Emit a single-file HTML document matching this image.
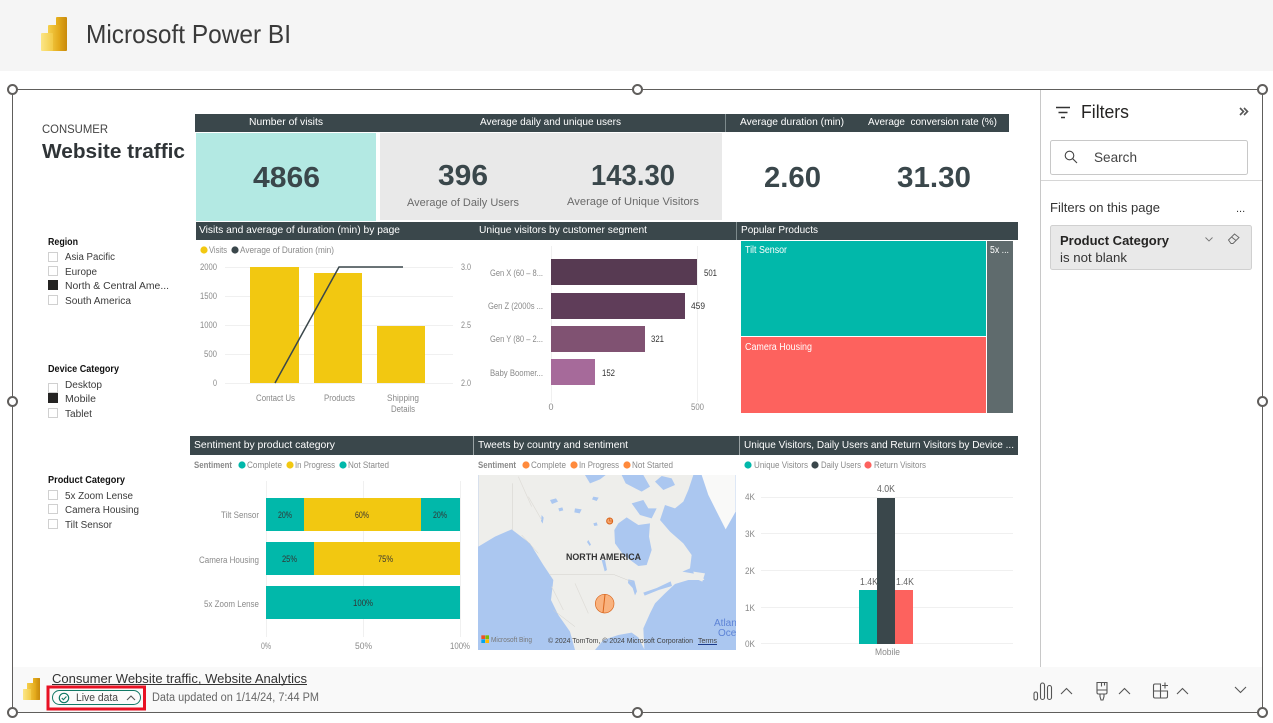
<!DOCTYPE html>
<html lang="en">
<head>
<meta charset="utf-8">
<title>Microsoft Power BI</title>
<style>
html,body{margin:0;padding:0;background:#fff;width:1273px;height:723px;overflow:hidden}
svg{display:block;position:absolute;left:0;top:0}
text{font-family:"Liberation Sans",Arial,sans-serif;white-space:pre}
.h{fill:#fff;font-size:10.5px}
.a{fill:#8a8a8a;font-size:9px}
.lg{fill:#8a8a8a;font-size:9px}
.s{fill:#3a3a3a;font-size:10px}
.sb{fill:#111;font-size:10px;font-weight:bold}
.k{fill:#3a474b;font-weight:bold;font-size:29px}
.l{fill:#6a6a6a;font-size:11px}
.d{fill:#333;font-size:9px}
.w{fill:#fff;font-size:10px}
.box{fill:#fff;stroke:#d0d0d0;stroke-width:1}
.g{stroke:#f0f0f0;stroke-width:1;fill:none}
.ic{fill:none;stroke:#555;stroke-width:1.1}
.hd{fill:#fff;stroke:#605e5c;stroke-width:2}
</style>
</head>
<body>
<svg width="1273" height="723" viewBox="0 0 1273 723" xmlns="http://www.w3.org/2000/svg">
<defs>
<linearGradient id="b1" x1="0" y1="0" x2="1" y2="0"><stop offset="0" stop-color="#e8b21f"/><stop offset="1" stop-color="#c98a0c"/></linearGradient>
<linearGradient id="b2" x1="0" y1="0" x2="1" y2="0"><stop offset="0" stop-color="#f5d04c"/><stop offset="1" stop-color="#e2a617"/></linearGradient>
<linearGradient id="b3" x1="0" y1="0" x2="1" y2="0"><stop offset="0" stop-color="#fbe687"/><stop offset="1" stop-color="#f3cb47"/></linearGradient>
<clipPath id="mapc"><rect x="478" y="475" width="258" height="175"/></clipPath>
</defs>

<!-- top bar -->
<rect x="0" y="0" width="1273" height="71" fill="#f5f5f5"/>
<rect x="56" y="17" width="11" height="34" rx="1" fill="url(#b1)"/>
<rect x="48" y="25" width="12" height="26" rx="1" fill="url(#b2)"/>
<rect x="41" y="33" width="12" height="18" rx="1" fill="url(#b3)"/>
<text x="86" y="43" font-size="26" fill="#3a3a3a" textLength="205" lengthAdjust="spacingAndGlyphs">Microsoft Power BI</text>

<!-- bottom bar -->
<rect x="13" y="667" width="1249" height="46" fill="#f9f9f9"/>

<!-- title -->
<text x="42" y="133" font-size="12" fill="#444" textLength="66" lengthAdjust="spacingAndGlyphs">CONSUMER</text>
<text x="42" y="158" font-size="20.500" font-weight="bold" fill="#2f3437" textLength="143" lengthAdjust="spacingAndGlyphs">Website traffic</text>

<!-- KPI headers -->
<rect x="195" y="114" width="814" height="18" fill="#3a474b"/>
<rect x="725" y="114" width="1" height="18" fill="#7d8a8c"/>
<text class="h" x="249" y="125" textLength="74" lengthAdjust="spacingAndGlyphs">Number of visits</text>
<text class="h" x="480" y="125" textLength="141" lengthAdjust="spacingAndGlyphs">Average daily and unique users</text>
<text class="h" x="740" y="125" textLength="104" lengthAdjust="spacingAndGlyphs">Average duration (min)</text>
<text class="h" x="868" y="125" textLength="129" lengthAdjust="spacingAndGlyphs">Average  conversion rate (%)</text>

<rect x="196" y="133" width="180" height="88" fill="#b3e9e3"/>
<rect x="380" y="133" width="342" height="87" fill="#e9e9e9"/>
<text class="k" x="253" y="187" textLength="67" lengthAdjust="spacingAndGlyphs">4866</text>
<text class="k" x="438" y="185" textLength="50" lengthAdjust="spacingAndGlyphs">396</text>
<text class="k" x="591" y="185" textLength="84" lengthAdjust="spacingAndGlyphs">143.30</text>
<text class="k" x="764" y="187" textLength="57" lengthAdjust="spacingAndGlyphs">2.60</text>
<text class="k" x="897" y="187" textLength="74" lengthAdjust="spacingAndGlyphs">31.30</text>
<text class="l" x="407" y="206" textLength="112" lengthAdjust="spacingAndGlyphs">Average of Daily Users</text>
<text class="l" x="567" y="205" textLength="132" lengthAdjust="spacingAndGlyphs">Average of Unique Visitors</text>

<!-- row 2 headers -->
<rect x="196" y="222" width="822" height="18" fill="#3a474b"/>
<rect x="736" y="222" width="1" height="18" fill="#7d8a8c"/>
<text class="h" x="199" y="233" textLength="201" lengthAdjust="spacingAndGlyphs">Visits and average of duration (min) by page</text>
<text class="h" x="479" y="233" textLength="168" lengthAdjust="spacingAndGlyphs">Unique visitors by customer segment</text>
<text class="h" x="741" y="233" textLength="77" lengthAdjust="spacingAndGlyphs">Popular Products</text>

<!-- row 3 headers -->
<rect x="190" y="436" width="828" height="19" fill="#3a474b"/>
<rect x="473" y="436" width="1" height="19" fill="#9aa3a5"/>
<rect x="739" y="436" width="1" height="19" fill="#9aa3a5"/>
<text class="h" x="194" y="448" textLength="141" lengthAdjust="spacingAndGlyphs">Sentiment by product category</text>
<text class="h" x="478" y="448" textLength="150" lengthAdjust="spacingAndGlyphs">Tweets by country and sentiment</text>
<text class="h" x="744" y="448" textLength="270" lengthAdjust="spacingAndGlyphs">Unique Visitors, Daily Users and Return Visitors by Device ...</text>

<!-- slicers -->
<text class="sb" x="48" y="245" textLength="30" lengthAdjust="spacingAndGlyphs">Region</text>
<rect class="box" x="48.5" y="252.5" width="9" height="9"/>
<rect class="box" x="48.5" y="266.5" width="9" height="9"/>
<rect x="48" y="280" width="10" height="10" fill="#252423"/>
<rect class="box" x="48.5" y="295.5" width="9" height="9"/>
<text class="s" x="65" y="260" textLength="50" lengthAdjust="spacingAndGlyphs">Asia Pacific</text>
<text class="s" x="65" y="275" textLength="32" lengthAdjust="spacingAndGlyphs">Europe</text>
<text class="s" x="65" y="289" textLength="104" lengthAdjust="spacingAndGlyphs">North &amp; Central Ame...</text>
<text class="s" x="65" y="304" textLength="66" lengthAdjust="spacingAndGlyphs">South America</text>

<text class="sb" x="48" y="372" textLength="71" lengthAdjust="spacingAndGlyphs">Device Category</text>
<rect class="box" x="48.5" y="383.5" width="9" height="9"/>
<rect x="48" y="393" width="10" height="10" fill="#252423"/>
<rect class="box" x="48.5" y="408.5" width="9" height="9"/>
<text class="s" x="65" y="388" textLength="37" lengthAdjust="spacingAndGlyphs">Desktop</text>
<text class="s" x="65" y="402" textLength="31" lengthAdjust="spacingAndGlyphs">Mobile</text>
<text class="s" x="65" y="417" textLength="27" lengthAdjust="spacingAndGlyphs">Tablet</text>

<text class="sb" x="48" y="483" textLength="77" lengthAdjust="spacingAndGlyphs">Product Category</text>
<rect class="box" x="48.5" y="490.5" width="9" height="9"/>
<rect class="box" x="48.5" y="504.5" width="9" height="9"/>
<rect class="box" x="48.5" y="519.5" width="9" height="9"/>
<text class="s" x="65" y="499" textLength="68" lengthAdjust="spacingAndGlyphs">5x Zoom Lense</text>
<text class="s" x="65" y="513" textLength="74" lengthAdjust="spacingAndGlyphs">Camera Housing</text>
<text class="s" x="65" y="528" textLength="47" lengthAdjust="spacingAndGlyphs">Tilt Sensor</text>

<!-- chart 1 -->
<circle cx="204" cy="250" r="3.6" fill="#f2c811"/>
<text class="lg" x="209" y="253" textLength="18" lengthAdjust="spacingAndGlyphs">Visits</text>
<circle cx="235" cy="250" r="3.6" fill="#3a474b"/>
<text class="lg" x="240" y="253" textLength="94" lengthAdjust="spacingAndGlyphs">Average of Duration (min)</text>
<path class="g" d="M225 267.5H453M225 296.5H453M225 325.5H453M225 354.5H453M225 383.5H453"/>
<rect x="250" y="267" width="49" height="116" fill="#f2c811"/>
<rect x="314" y="273" width="48" height="110" fill="#f2c811"/>
<rect x="377" y="326" width="48" height="57" fill="#f2c811"/>
<path d="M275 383L339 267H403" fill="none" stroke="#3a474b" stroke-width="1.5"/>
<text class="a" x="200" y="270" textLength="17" lengthAdjust="spacingAndGlyphs">2000</text>
<text class="a" x="200" y="299" textLength="17" lengthAdjust="spacingAndGlyphs">1500</text>
<text class="a" x="200" y="328" textLength="17" lengthAdjust="spacingAndGlyphs">1000</text>
<text class="a" x="204" y="357" textLength="13" lengthAdjust="spacingAndGlyphs">500</text>
<text class="a" x="213" y="386" textLength="4" lengthAdjust="spacingAndGlyphs">0</text>
<text class="a" x="461" y="270" textLength="10" lengthAdjust="spacingAndGlyphs">3.0</text>
<text class="a" x="461" y="328" textLength="10" lengthAdjust="spacingAndGlyphs">2.5</text>
<text class="a" x="461" y="386" textLength="10" lengthAdjust="spacingAndGlyphs">2.0</text>
<text class="a" x="256" y="401" textLength="39" lengthAdjust="spacingAndGlyphs">Contact Us</text>
<text class="a" x="324" y="401" textLength="31" lengthAdjust="spacingAndGlyphs">Products</text>
<text class="a" x="387" y="401" textLength="32" lengthAdjust="spacingAndGlyphs">Shipping</text>
<text class="a" x="391" y="412" textLength="24" lengthAdjust="spacingAndGlyphs">Details</text>

<!-- chart 2 -->
<path class="g" d="M551.5 246V402M697.5 246V402"/>
<rect x="551" y="259" width="146" height="26" fill="#573a52"/>
<rect x="551" y="293" width="134" height="26" fill="#5f3d59"/>
<rect x="551" y="326" width="94" height="26" fill="#805272"/>
<rect x="551" y="359" width="44" height="26" fill="#a66a9a"/>
<text class="a" x="490" y="276" textLength="53" lengthAdjust="spacingAndGlyphs">Gen X (60 – 8...</text>
<text class="a" x="488" y="309" textLength="55" lengthAdjust="spacingAndGlyphs">Gen Z (2000s ...</text>
<text class="a" x="490" y="342" textLength="53" lengthAdjust="spacingAndGlyphs">Gen Y (80 – 2...</text>
<text class="a" x="490" y="376" textLength="53" lengthAdjust="spacingAndGlyphs">Baby Boomer...</text>
<text class="d" x="704" y="276" textLength="13" lengthAdjust="spacingAndGlyphs">501</text>
<text class="d" x="691" y="309" textLength="14" lengthAdjust="spacingAndGlyphs">459</text>
<text class="d" x="651" y="342" textLength="13" lengthAdjust="spacingAndGlyphs">321</text>
<text class="d" x="602" y="376" textLength="13" lengthAdjust="spacingAndGlyphs">152</text>
<text class="a" x="551" y="410" text-anchor="middle">0</text>
<text class="a" x="691" y="410" textLength="13" lengthAdjust="spacingAndGlyphs">500</text>

<!-- treemap -->
<rect x="741" y="241" width="245" height="95" fill="#01b8aa"/>
<rect x="741" y="337" width="245" height="76" fill="#fd625e"/>
<rect x="987" y="241" width="26" height="172" fill="#5f6b6d"/>
<text class="w" x="745" y="253" textLength="42" lengthAdjust="spacingAndGlyphs">Tilt Sensor</text>
<text class="w" x="745" y="350" textLength="67" lengthAdjust="spacingAndGlyphs">Camera Housing</text>
<text class="w" x="990" y="253" textLength="19" lengthAdjust="spacingAndGlyphs">5x ...</text>

<!-- chart sentiment -->
<text class="lg" x="194" y="468" font-weight="bold" textLength="38" lengthAdjust="spacingAndGlyphs">Sentiment</text>
<circle cx="242" cy="465" r="3.6" fill="#01b8aa"/>
<text class="lg" x="247" y="468" textLength="35" lengthAdjust="spacingAndGlyphs">Complete</text>
<circle cx="290" cy="465" r="3.6" fill="#f2c811"/>
<text class="lg" x="295" y="468" textLength="40" lengthAdjust="spacingAndGlyphs">In Progress</text>
<circle cx="343" cy="465" r="3.6" fill="#01b8aa"/>
<text class="lg" x="348" y="468" textLength="41" lengthAdjust="spacingAndGlyphs">Not Started</text>
<path class="g" d="M266.5 481V637M363.5 481V637M460.5 481V637"/>
<rect x="266" y="498" width="38" height="33" fill="#01b8aa"/>
<rect x="304" y="498" width="117" height="33" fill="#f2c811"/>
<rect x="421" y="498" width="39" height="33" fill="#01b8aa"/>
<rect x="266" y="542" width="48" height="33" fill="#01b8aa"/>
<rect x="314" y="542" width="146" height="33" fill="#f2c811"/>
<rect x="266" y="586" width="194" height="33" fill="#01b8aa"/>
<text class="a" x="221" y="518" textLength="38" lengthAdjust="spacingAndGlyphs">Tilt Sensor</text>
<text class="a" x="199" y="563" textLength="60" lengthAdjust="spacingAndGlyphs">Camera Housing</text>
<text class="a" x="204" y="607" textLength="55" lengthAdjust="spacingAndGlyphs">5x Zoom Lense</text>
<text class="d" x="278" y="518" textLength="14" lengthAdjust="spacingAndGlyphs">20%</text>
<text class="d" x="355" y="518" textLength="14" lengthAdjust="spacingAndGlyphs">60%</text>
<text class="d" x="433" y="518" textLength="14" lengthAdjust="spacingAndGlyphs">20%</text>
<text class="d" x="282" y="562" textLength="15" lengthAdjust="spacingAndGlyphs">25%</text>
<text class="d" x="378" y="562" textLength="15" lengthAdjust="spacingAndGlyphs">75%</text>
<text class="d" x="353" y="606" textLength="20" lengthAdjust="spacingAndGlyphs">100%</text>
<text class="a" x="261" y="649" textLength="10" lengthAdjust="spacingAndGlyphs">0%</text>
<text class="a" x="355" y="649" textLength="17" lengthAdjust="spacingAndGlyphs">50%</text>
<text class="a" x="450" y="649" textLength="20" lengthAdjust="spacingAndGlyphs">100%</text>

<!-- map -->
<text class="lg" x="478" y="468" font-weight="bold" textLength="38" lengthAdjust="spacingAndGlyphs">Sentiment</text>
<circle cx="526" cy="465" r="3.6" fill="#ff8a3c"/>
<text class="lg" x="531" y="468" textLength="35" lengthAdjust="spacingAndGlyphs">Complete</text>
<circle cx="574" cy="465" r="3.6" fill="#ff8a3c"/>
<text class="lg" x="579" y="468" textLength="40" lengthAdjust="spacingAndGlyphs">In Progress</text>
<circle cx="627" cy="465" r="3.6" fill="#ff8a3c"/>
<text class="lg" x="632" y="468" textLength="41" lengthAdjust="spacingAndGlyphs">Not Started</text>
<g clip-path="url(#mapc)">
<rect x="478" y="475" width="258" height="175" fill="#abc7f0"/>
<g transform="translate(475 440) scale(.33333)">
<path fill="#eeeeeb" d="M10 105L655 105L640 150L625 185L600 205L570 195L555 240L585 275L625 310L650 345L645 385L622 395L680 405L688 420L640 420L600 432L570 460L540 490L525 520L505 565L508 628L490 592L470 578L430 585L385 600L360 630L300 630L285 575L250 525L228 480L235 420L205 375L165 310L110 268L60 290L10 320Z"/>
<path fill="#f9f9f8" d="M680 105H782V215L752 268L725 215L700 165Z"/>
<path fill="#eeeeeb" d="M655 395L690 400L682 425L660 415Z"/>
<path fill="#abc7f0" d="M430 250L455 232L490 255L525 250L522 290L530 330L515 375L490 378L445 345L420 310L418 270Z"/>
<path fill="#abc7f0" d="M330 105L345 130L375 118L392 105ZM440 105L452 130L500 155L525 140L505 105ZM540 125L565 150L600 135L590 115L560 108ZM470 190L505 180L520 205L545 205L530 235L495 225ZM225 180l18 -5l6 10l-18 7zM250 205l12 -3l3 9l-12 3zM300 205l20 3l-6 12l-16 -3zM355 170l16 3l-6 10l-14 -5zM355 250l10 -3l3 9l-10 2zM200 225l6 8l-3 18l-5 -8zM380 360l10 0l6 30l-7 4zM340 300l8 14l-4 4l-8 -12zM460 418l18 4l8 32l-6 12l-7 -22l-14 -15zM505 458l40 -14l42 -20l4 14l-40 12l-42 17z"/>
<path fill="none" stroke="#d2d0cb" stroke-width="1.500" d="M112 130V270M225 403H415L470 425M235 510L300 560M140 285L190 340"/>
<path fill="none" stroke="#dedcd7" stroke-width="2" d="M230 440L265 510M300 430L340 520M160 170L200 240M130 110L170 200"/>
<circle cx="404" cy="243" r="9" fill="#f5a46c" stroke="#d9651c" stroke-width="3"/>
<path d="M404 234V243H413" fill="none" stroke="#d9651c" stroke-width="2"/>
<circle cx="389" cy="491" r="28" fill="#f9b27e" stroke="#d9651c" stroke-width="2"/>
<path d="M390 463L384 519" fill="none" stroke="#d9651c" stroke-width="3"/>
<rect x="19" y="586" width="11" height="11" fill="#f25022"/><rect x="31" y="586" width="11" height="11" fill="#7fba00"/>
<rect x="19" y="598" width="11" height="11" fill="#00a4ef"/><rect x="31" y="598" width="11" height="11" fill="#ffb900"/>
</g>
<text x="566" y="560" font-size="9.5" font-weight="bold" fill="#333" textLength="75" lengthAdjust="spacingAndGlyphs">NORTH AMERICA</text>
<text x="491" y="642" font-size="7" fill="#777" textLength="41" lengthAdjust="spacingAndGlyphs">Microsoft Bing</text>
<text x="548" y="643" font-size="7" fill="#444" textLength="145" lengthAdjust="spacingAndGlyphs">© 2024 TomTom, © 2024 Microsoft Corporation</text>
<text x="698" y="643" font-size="7" fill="#444" textLength="19" lengthAdjust="spacingAndGlyphs">Terms</text>
<rect x="698" y="644" width="19" height="1" fill="#1a3a8a"/>
<text x="714" y="626" font-size="10" fill="#5d83d6">Atlantic</text>
<text x="718" y="636" font-size="10" fill="#5d83d6">Ocean</text>
</g>

<!-- right chart -->
<circle cx="748" cy="465" r="3.6" fill="#01b8aa"/>
<text class="lg" x="754" y="468" textLength="54" lengthAdjust="spacingAndGlyphs">Unique Visitors</text>
<circle cx="815" cy="465" r="3.6" fill="#3a474b"/>
<text class="lg" x="821" y="468" textLength="40" lengthAdjust="spacingAndGlyphs">Daily Users</text>
<circle cx="868" cy="465" r="3.6" fill="#fd625e"/>
<text class="lg" x="874" y="468" textLength="52" lengthAdjust="spacingAndGlyphs">Return Visitors</text>
<path class="g" d="M761 497.5H1013M761 533.5H1013M761 570.5H1013M761 607.5H1013M761 643.5H1013"/>
<rect x="859" y="590" width="18" height="54" fill="#01b8aa"/>
<rect x="877" y="498" width="18" height="146" fill="#3a474b"/>
<rect x="895" y="590" width="18" height="54" fill="#fd625e"/>
<text class="a" x="745" y="500" textLength="10" lengthAdjust="spacingAndGlyphs">4K</text>
<text class="a" x="745" y="537" textLength="10" lengthAdjust="spacingAndGlyphs">3K</text>
<text class="a" x="745" y="574" textLength="10" lengthAdjust="spacingAndGlyphs">2K</text>
<text class="a" x="745" y="611" textLength="10" lengthAdjust="spacingAndGlyphs">1K</text>
<text class="a" x="745" y="647" textLength="10" lengthAdjust="spacingAndGlyphs">0K</text>
<text x="877" y="492" font-size="10" fill="#666" textLength="18" lengthAdjust="spacingAndGlyphs">4.0K</text>
<text x="860" y="585" font-size="10" fill="#666" textLength="18" lengthAdjust="spacingAndGlyphs">1.4K</text>
<text x="896" y="585" font-size="10" fill="#666" textLength="18" lengthAdjust="spacingAndGlyphs">1.4K</text>
<text class="a" x="875" y="655" textLength="25" lengthAdjust="spacingAndGlyphs">Mobile</text>

<!-- filter pane -->
<rect x="1040" y="90" width="1" height="577" fill="#c8c8c8"/>
<path d="M1056 107.500H1070M1058.500 112.500H1067.500M1061 117.500H1065" fill="none" stroke="#333" stroke-width="1.500"/>
<text x="1081" y="118" font-size="18" fill="#252423" textLength="48" lengthAdjust="spacingAndGlyphs">Filters</text>
<path d="M1240 108l3.500 3.500l-3.500 3.500M1244 108l3.500 3.500l-3.500 3.500" fill="none" stroke="#555" stroke-width="1.600"/>
<rect x="1050.500" y="140.500" width="197" height="34" rx="2" fill="#fff" stroke="#c8c8c8"/>
<circle cx="1069.500" cy="155.500" r="4.300" fill="none" stroke="#444" stroke-width="1.100"/>
<path d="M1072.700 158.700L1077 163" stroke="#444" stroke-width="1.100"/>
<text x="1094" y="162" font-size="14" fill="#444" textLength="43" lengthAdjust="spacingAndGlyphs">Search</text>
<rect x="1041" y="180" width="221" height="1" fill="#d6d6d6"/>
<text x="1050" y="212" font-size="12.500" fill="#333" textLength="110" lengthAdjust="spacingAndGlyphs">Filters on this page</text>
<text x="1236" y="212" font-size="11" fill="#333">...</text>
<rect x="1050.500" y="225.500" width="201" height="44" rx="2" fill="#e9e9e9" stroke="#d0d0d0"/>
<text x="1060" y="245" font-size="13" font-weight="bold" fill="#252423" textLength="109" lengthAdjust="spacingAndGlyphs">Product Category</text>
<text x="1060" y="262" font-size="13" fill="#333" textLength="67" lengthAdjust="spacingAndGlyphs">is not blank</text>
<path d="M1205.500 237.500l3.500 3.500l3.500 -3.500" fill="none" stroke="#777" stroke-width=".9"/>
<path d="M1228.500 240l6 -6l4.500 3.500l-6 6h-2zM1231.500 237l4.500 3.500" fill="none" stroke="#666" stroke-width=".9"/>

<!-- footer -->
<rect x="33" y="678" width="7" height="22" rx=".5" fill="url(#b1)"/>
<rect x="27" y="683" width="9" height="17" rx=".5" fill="url(#b2)"/>
<rect x="23" y="689" width="8" height="11" rx=".5" fill="url(#b3)"/>
<text x="52" y="683" font-size="13" fill="#333" textLength="255" lengthAdjust="spacingAndGlyphs">Consumer Website traffic, Website Analytics</text>
<rect x="52" y="684" width="255" height="1" fill="#333"/>
<rect x="52.500" y="690.500" width="88" height="14" rx="7" fill="#fbfbfb" stroke="#117865"/>
<rect x="48" y="687" width="96.500" height="22" fill="none" stroke="#e81123" stroke-width="3"/>
<circle cx="64" cy="698" r="4.700" fill="none" stroke="#117865" stroke-width="1.200"/>
<path d="M61.800 698l1.600 1.700l3 -3.200" fill="none" stroke="#117865" stroke-width="1.100"/>
<text x="76" y="701" font-size="11" fill="#444" textLength="42" lengthAdjust="spacingAndGlyphs">Live data</text>
<path d="M127 700l4 -4l4 4" fill="none" stroke="#555" stroke-width="1.100"/>
<text x="152" y="701" font-size="11.500" fill="#666" textLength="167" lengthAdjust="spacingAndGlyphs">Data updated on 1/14/24, 7:44 PM</text>

<rect class="ic" x="1034" y="692" width="3.500" height="8" rx="1.700"/>
<rect class="ic" x="1040.500" y="683" width="4" height="16.500" rx="2"/>
<rect class="ic" x="1047.500" y="685.500" width="4" height="14" rx="2"/>
<path class="ic" d="M1061 694l5.500 -5.500l5.500 5.500"/>
<path class="ic" d="M1097 682.500h10v10a1.500 1.500 0 0 1 -1.500 1.500h-7a1.500 1.500 0 0 1 -1.500 -1.500zM1097 690h10M1100 694v2.500l1 3.500h2l1 -3.500v-2.500M1101.500 682.500v4M1104.500 682.500v3"/>
<path class="ic" d="M1119 694l5.500 -5.500l5.500 5.500"/>
<path class="ic" d="M1167.500 690.500v6a1.500 1.500 0 0 1 -1.500 1.500h-11a1.500 1.500 0 0 1 -1.500 -1.500v-11a1.500 1.500 0 0 1 1.500 -1.500h5.500v14.500M1153.500 691h14M1165 682.500v6M1162 685.500h6"/>
<path class="ic" d="M1177 694l5.500 -5.500l5.500 5.500"/>
<path class="ic" d="M1235 687l5.500 5.500l5.500 -5.500"/>

<!-- frame -->
<rect x="12.500" y="89.500" width="1250" height="623" fill="none" stroke="#605e5c" stroke-width="1"/>
<circle class="hd" cx="12.500" cy="89.500" r="4.500"/>
<circle class="hd" cx="637.500" cy="89.500" r="4.500"/>
<circle class="hd" cx="1262.500" cy="89.500" r="4.500"/>
<circle class="hd" cx="12.500" cy="401.500" r="4.500"/>
<circle class="hd" cx="1262.500" cy="401.500" r="4.500"/>
<circle class="hd" cx="12.500" cy="712.500" r="4.500"/>
<circle class="hd" cx="637.500" cy="712.500" r="4.500"/>
<circle class="hd" cx="1262.500" cy="712.500" r="4.500"/>
</svg>
</body>
</html>
